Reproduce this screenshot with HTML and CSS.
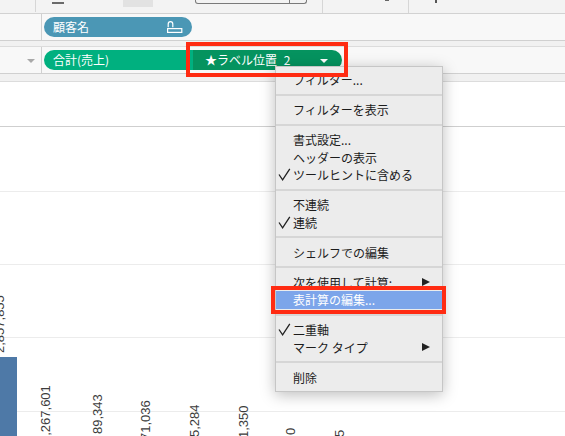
FILE: index.html
```html
<!DOCTYPE html>
<html lang="ja">
<head>
<meta charset="utf-8">
<link rel="stylesheet" href="styles.css">
</head>
<body>
<div class="toolbar">
  <div class="tb-cell"></div>
  <div class="tb-dash"></div>
  <div class="tb-block"></div>
  <div class="tb-box"><div class="tb-box-main"></div></div>
  <div class="tb-sep tb-sep1"></div>
  <div class="tb-mark"></div>
  <div class="tb-sep tb-sep2"></div>
  <div class="tb-mark2"></div>
</div>

<div class="shelf">
  <div class="shelf-head"></div>
  <div class="shelf-body">
    <div class="pill pill-blue">
      <span class="pill-text">顧客名</span>
      <svg class="pill-icon" width="16" height="13" viewBox="0 0 16 13"><path d="M1.2 6.2 V3 A2.3 2.3 0 0 1 5.8 3 V6.2" fill="none" stroke="#fff" stroke-width="1.2"/><rect x="0.6" y="7.6" width="14.2" height="3.8" fill="none" stroke="#fff" stroke-width="1.2"/></svg>
    </div>
  </div>
</div>
<div class="gap gap1"></div>
<div class="shelf">
  <div class="shelf-head"><span class="head-arrow"></span></div>
  <div class="shelf-body">
    <div class="pill pill-green"><span class="pill-text">合計(売上)</span></div>
    <div class="pill pill-dark"><span class="pill-text">★ラベル位置_2</span><span class="pill-caret"></span></div>
  </div>
</div>
<div class="gap gap2"></div>

<div class="chart">
  <div class="band band1"></div>
  <div class="band band2"></div>
  <div class="band band3"></div>
  <div class="band band4"></div>
  <div class="band band5"></div>
  <div class="bar" style="left:0;top:275px;width:17px;height:90px"></div>
  <span class="lbl" style="left:-8px;top:271px">2,857,855</span>
  <span class="lbl" style="left:38px;top:361px">1,267,601</span>
  <span class="lbl" style="left:90px;top:352px">89,343</span>
  <span class="lbl" style="left:138px;top:358px">71,036</span>
  <span class="lbl" style="left:187px;top:355px">5,284</span>
  <span class="lbl" style="left:236px;top:356px">1,350</span>
  <span class="lbl" style="left:283px;top:353px">0</span>
  <span class="lbl" style="left:332px;top:355px">5</span>
</div>

<div class="menu">
  <div class="item"><span class="ck"></span><span class="txt">フィルター...</span></div>
  <div class="sep"></div>
  <div class="item"><span class="ck"></span><span class="txt">フィルターを表示</span></div>
  <div class="sep"></div>
  <div class="item"><span class="ck"></span><span class="txt">書式設定...</span></div>
  <div class="item"><span class="ck"></span><span class="txt">ヘッダーの表示</span></div>
  <div class="item"><span class="ck"><svg width="13" height="13" viewBox="0 0 13 13"><path d="M1 6.5 L4.6 11.8 L11.8 0.8" fill="none" stroke="#222" stroke-width="1.3"/></svg></span><span class="txt">ツールヒントに含める</span></div>
  <div class="sep"></div>
  <div class="item"><span class="ck"></span><span class="txt">不連続</span></div>
  <div class="item"><span class="ck"><svg width="13" height="13" viewBox="0 0 13 13"><path d="M1 6.5 L4.6 11.8 L11.8 0.8" fill="none" stroke="#222" stroke-width="1.3"/></svg></span><span class="txt">連続</span></div>
  <div class="sep"></div>
  <div class="item"><span class="ck"></span><span class="txt">シェルフでの編集</span></div>
  <div class="sep"></div>
  <div class="item"><span class="ck"></span><span class="txt">次を使用して計算:</span><span class="arr"></span></div>
  <div class="item item-hl"><span class="ck"></span><span class="txt">表計算の編集...</span></div>
  <div class="sep"></div>
  <div class="item"><span class="ck"><svg width="13" height="13" viewBox="0 0 13 13"><path d="M1 6.5 L4.6 11.8 L11.8 0.8" fill="none" stroke="#222" stroke-width="1.3"/></svg></span><span class="txt">二重軸</span></div>
  <div class="item"><span class="ck"></span><span class="txt">マーク タイプ</span><span class="arr"></span></div>
  <div class="sep"></div>
  <div class="item"><span class="ck"></span><span class="txt">削除</span></div>
</div>

<div class="redbox redbox-pill"></div>
<div class="redbox redbox-item"></div>
</body>
</html>
```

FILE: styles.css
```css
* { box-sizing: border-box; }
html, body { margin: 0; padding: 0; }
body {
  width: 565px;
  height: 436px;
  overflow: hidden;
  position: relative;
  background: #fff;
  font-family: "Noto Sans CJK JP", "Noto Sans", sans-serif;
}

/* top toolbar */
.toolbar {
  height: 14px;
  background: #f3f3f3;
  border-bottom: 1px solid #d2d2d2;
  display: flex;
  align-items: flex-start;
}
.tb-cell { width: 36px; height: 12px; border-right: 1px solid #d6d6d6; }
.tb-dash { margin-left: 16px; margin-top: 2px; width: 12px; height: 2px; background: #6a6a6a; }
.tb-block { margin-left: 59px; width: 30px; height: 7px; background: #e2e2e2; }
.tb-box {
  margin-left: 42px; width: 112px; height: 4px;
  border: 1px solid #7a7a7a; border-top: none;
  border-radius: 0 0 3px 3px;
  display: flex;
}
.tb-box-main { width: 94px; height: 100%; border-right: 1px solid #7a7a7a; }
.tb-sep { width: 1px; height: 13px; background: #d6d6d6; }
.tb-sep1 { margin-left: 15px; }
.tb-mark { margin-left: 62px; width: 4px; height: 1px; background: #666; }
.tb-sep2 { margin-left: 19px; }
.tb-mark2 { margin-left: 26px; width: 2px; height: 3px; background: #555; }

/* shelves */
.shelf {
  display: flex;
  height: 27px;
  background: #f8f8f8;
  border-bottom: 1px solid #d0d0d0;
}
.shelf-head {
  width: 42px;
  border-right: 1px solid #d0d0d0;
  display: flex;
  align-items: center;
  justify-content: flex-end;
  padding-right: 6px;
}
.head-arrow {
  width: 0; height: 0;
  border-left: 4px solid transparent;
  border-right: 4px solid transparent;
  border-top: 4px solid #a9a9a9;
  margin-top: 2px;
}
.shelf-body {
  flex: 1;
  display: flex;
  align-items: center;
  padding-left: 2px;
}
.gap1 { height: 6px; background: #f1f1f1; border-bottom: 1px solid #dcdcdc; }
.gap2 { height: 8px; background: #f1f1f1; border-bottom: 1px solid #dcdcdc; }

.pill {
  height: 20px;
  display: flex;
  align-items: center;
  color: #fff;
  font-size: 12px;
}
.pill-text { line-height: 20px; }
.pill-blue {
  width: 148px;
  background: #4b97b5;
  border-radius: 10px;
  padding-left: 9px;
  padding-right: 9px;
  justify-content: space-between;
}
.pill-icon { display: block; margin-top: 1px; }
.pill-green {
  width: 149px;
  background: #00b07f;
  border-radius: 10px 0 0 10px;
  padding-left: 9px;
}
.pill-dark {
  width: 149px;
  background: #05935f;
  border-radius: 0 10px 10px 0;
  padding-left: 12px;
  padding-right: 14px;
}
.pill-caret {
  margin-left: auto;
  width: 0; height: 0;
  border-left: 4px solid transparent;
  border-right: 4px solid transparent;
  border-top: 4px solid #fff;
  margin-top: 1px;
}

/* chart */
.chart { position: relative; height: 354px; }
.band { border-bottom: 1px solid #ececec; }
.band1 { height: 45px; border-bottom-color: #cfcfcf; }
.band2 { height: 65px; }
.band3 { height: 73px; }
.band4 { height: 73px; }
.band5 { height: 74px; }
.bar { position: absolute; background: #4e79a7; }
.lbl {
  position: absolute;
  font-family: "Liberation Sans", Arial, sans-serif;
  font-size: 13px;
  line-height: 15px;
  color: #3c3c3c;
  white-space: nowrap;
  transform-origin: 0 0;
  transform: rotate(-90deg);
}

/* context menu */
.menu {
  position: absolute;
  left: 275px;
  top: 66px;
  width: 168px;
  height: 326px;
  background: #ececec;
  border: 1px solid #c6c6c6;
  box-shadow: 0 3px 14px rgba(0, 0, 0, 0.26);
  padding: 4px 0 5px;
}
.item {
  height: 17.5px;
  display: flex;
  align-items: center;
  font-size: 12px;
  color: #1c1c1c;
  line-height: 17.5px;
}
.ck {
  width: 17px;
  flex: none;
  display: flex;
  align-items: center;
  padding-left: 2px;
}
.ck svg { display: block; }
.txt { flex: 1; white-space: nowrap; }
.arr {
  width: 0; height: 0;
  border-left: 8px solid #222;
  border-top: 4.5px solid transparent;
  border-bottom: 4.5px solid transparent;
  margin-right: 12px;
}
.item-hl { background: #7ca5ea; color: #fff; }
.sep { height: 2px; margin: 5.25px 0; background: #d6d6d6; }

/* annotation boxes */
.redbox {
  position: absolute;
  border: 4px solid #ff2b12;
}
.redbox-pill { left: 186px; top: 42px; width: 162px; height: 35px; }
.redbox-item { left: 271px; top: 286px; width: 175px; height: 28px; }
```
